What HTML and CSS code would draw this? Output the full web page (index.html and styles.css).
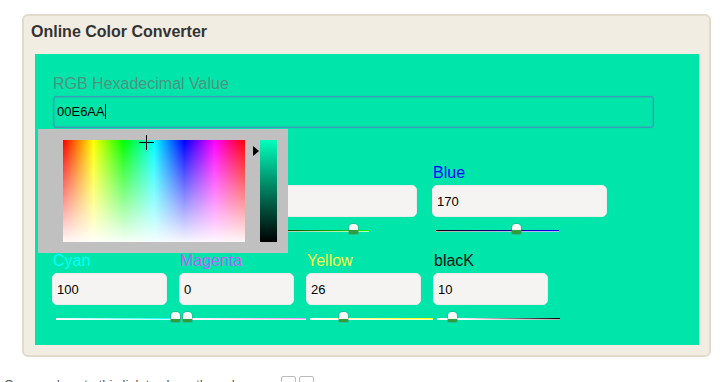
FILE: index.html
```html
<!DOCTYPE html>
<html>
<head>
    <title>Online Color Converter</title>
    <meta charset="utf-8">
    <link rel="stylesheet" href="styles.css">
</head>
<body>
    <div class="converter">
        <h2 class="title">Online Color Converter</h2>
        <div class="board">
            <div class="hex">
                <label class="hex-label">RGB Hexadecimal Value</label>
                <div class="hex-field">00E6AA<span class="caret"></span></div>
                <div class="picker">
                    <div class="spectrum">
                        <svg class="cross" width="15" height="15" viewBox="0 0 15 15">
                            <path d="M7.5 0V15M0 7.5H15" stroke="#000" stroke-width="1"/>
                        </svg>
                    </div>
                    <span class="arrow"></span>
                    <div class="shade"></div>
                </div>
            </div>

            <div class="row rgb">
                <div class="field">
                    <label class="lbl red">Red</label>
                    <input class="num" type="text" value="0">
                    <div class="slider"><div class="track t-red"></div><span class="thumb" style="left:-0.5px"></span></div>
                </div>
                <div class="field">
                    <label class="lbl green">Green</label>
                    <input class="num" type="text" value="230">
                    <div class="slider"><div class="track t-green"></div><span class="thumb" style="left:103.2px"></span></div>
                </div>
                <div class="field">
                    <label class="lbl blue">Blue</label>
                    <input class="num" type="text" value="170">
                    <div class="slider"><div class="track t-blue"></div><span class="thumb" style="left:76.2px"></span></div>
                </div>
            </div>

            <div class="row cmyk">
                <div class="field">
                    <label class="lbl cyan">Cyan</label>
                    <input class="num" type="text" value="100">
                    <div class="slider"><div class="track t-cyan"></div><span class="thumb" style="left:115px"></span></div>
                </div>
                <div class="field">
                    <label class="lbl magenta">Magenta</label>
                    <input class="num" type="text" value="0">
                    <div class="slider"><div class="track t-magenta"></div><span class="thumb" style="left:-0.5px"></span></div>
                </div>
                <div class="field">
                    <label class="lbl yellow">Yellow</label>
                    <input class="num" type="text" value="26">
                    <div class="slider"><div class="track t-yellow"></div><span class="thumb" style="left:29.4px"></span></div>
                </div>
                <div class="field">
                    <label class="lbl black">blacK</label>
                    <input class="num" type="text" value="10">
                    <div class="slider"><div class="track t-black"></div><span class="thumb" style="left:11px"></span></div>
                </div>
            </div>
        </div>
    </div>
    <p class="note">Copy and paste this link to share the color now: <span class="box"></span> <span class="box"></span></p>
</body>
</html>
```
FILE: styles.css
```css
body {
    margin: 0;
    font-family: "Liberation Sans", Arial, sans-serif;
    background-color: #ffffff;
}
.converter {
    box-sizing: border-box;
    width: 689px;
    margin: 14px 0 0 22px;
    border: 2px solid #e2dbca;
    border-radius: 6px;
    background-color: #f2ede3;
}
.title {
    margin: 0;
    padding: 6px 0 12px 7px;
    font-size: 16px;
    line-height: 20px;
    font-weight: bold;
    color: #333333;
}
.board {
    margin: 0 10px 10px 11px;
    padding: 19px 17px 6px 17px;
    background-color: #00e6aa;
}
.hex {
    position: relative;
    z-index: 2;
    margin-bottom: 35px;
}
.hex-label {
    display: block;
    margin: 1px 0 0 1px;
    font-size: 16px;
    line-height: 20px;
    color: #55907e;
}
.hex-field {
    box-sizing: border-box;
    width: 601px;
    height: 32px;
    margin: 2px 0 0 1px;
    padding: 0 0 0 3px;
    border: 1px solid #3a9cb8;
    border-radius: 3px;
    box-shadow: inset 0 0 1px 1px rgba(58,156,184,0.45), 0 0 1px rgba(58,156,184,0.6);
    font-size: 13px;
    line-height: 30px;
    color: #000000;
}
.caret {
    display: inline-block;
    width: 0;
    height: 15px;
    border-left: 1px solid #000000;
    vertical-align: -3px;
}
.picker {
    position: absolute;
    left: -14px;
    top: 55px;
    z-index: 3;
    box-sizing: border-box;
    width: 250px;
    height: 124px;
    padding: 11px 11px 11px 25px;
    display: flex;
    gap: 15px;
    background-color: #c0c0c0;
}
.spectrum {
    position: relative;
    width: 182px;
    height: 102px;
    background:
        linear-gradient(to bottom, rgba(255,255,255,0), rgba(255,255,255,0.97)),
        linear-gradient(to right, #ff0000, #ffff00, #00ff00, #00ffff, #0000ff, #ff00ff, #ff0000);
}
.cross {
    position: absolute;
    left: 76px;
    top: -5px;
}
.arrow {
    position: absolute;
    left: 215px;
    top: 17px;
    width: 0;
    height: 0;
    border-top: 5px solid transparent;
    border-bottom: 5px solid transparent;
    border-left: 6px solid #000000;
}
.shade {
    width: 17px;
    height: 102px;
    background: linear-gradient(to bottom, #00ffbc, #007a5a 50%, #000000);
}
.row {
    display: flex;
}
.rgb {
    gap: 15px;
}
.rgb .field {
    width: 175px;
}
.cmyk {
    gap: 12px;
}
.cmyk .field {
    width: 115px;
}
.lbl {
    display: block;
    margin-left: 1px;
    font-size: 16px;
    line-height: 20px;
}
.red { color: #ff0000; }
.green { color: #00aa00; }
.blue { color: #0000ff; }
.cyan { color: #00ffff; }
.magenta { color: #c060ff; }
.yellow { color: #ffff40; }
.black { color: #111111; }
.num {
    display: block;
    box-sizing: border-box;
    width: 100%;
    height: 32px;
    margin: 2px 0 0 0;
    padding: 0 4px;
    border: 1px solid #ecebea;
    border-radius: 5px;
    background-color: #f6f4f3;
    font-family: "Liberation Sans", Arial, sans-serif;
    font-size: 13px;
    color: #000000;
    outline: none;
}
.slider {
    position: relative;
    width: 123px;
    height: 34px;
    margin-left: 4px;
}
.track {
    position: absolute;
    left: 0;
    right: 0;
    top: 13px;
    height: 1px;
    border-bottom: 1px solid rgba(255,255,255,0.7);
}
.t-red { background: linear-gradient(to right, #000000, #ff0000); }
.t-green { background: linear-gradient(to right, #000000, #00ff00); }
.t-blue { background: linear-gradient(to right, #000000, #0000ff); }
.t-cyan { background: linear-gradient(to right, #ffffff, #00ffff); }
.t-magenta { background: linear-gradient(to right, #ffffff, #e0a0f0); }
.t-yellow { background: linear-gradient(to right, #ffffff, #ffff00); }
.t-black { background: linear-gradient(to right, #ffffff 20%, #000000); }
.thumb {
    position: absolute;
    top: 7px;
    z-index: 1;
    width: 9px;
    height: 10px;
    border-radius: 4px 4px 1px 1px;
    background: linear-gradient(to bottom, #ffffff 0, #f4f4f4 65%, #2f9e3e 65%, #2f9e3e 100%);
    box-shadow: 0 0 0 1px rgba(90,120,100,0.35);
}
.note {
    margin: 19px 0 0 4px;
    font-size: 13px;
    line-height: 16px;
    color: #555555;
}
.box {
    display: inline-block;
    width: 13px;
    height: 13px;
    border: 1px solid #bbbbbb;
    border-radius: 2px;
    vertical-align: -2px;
}
```
